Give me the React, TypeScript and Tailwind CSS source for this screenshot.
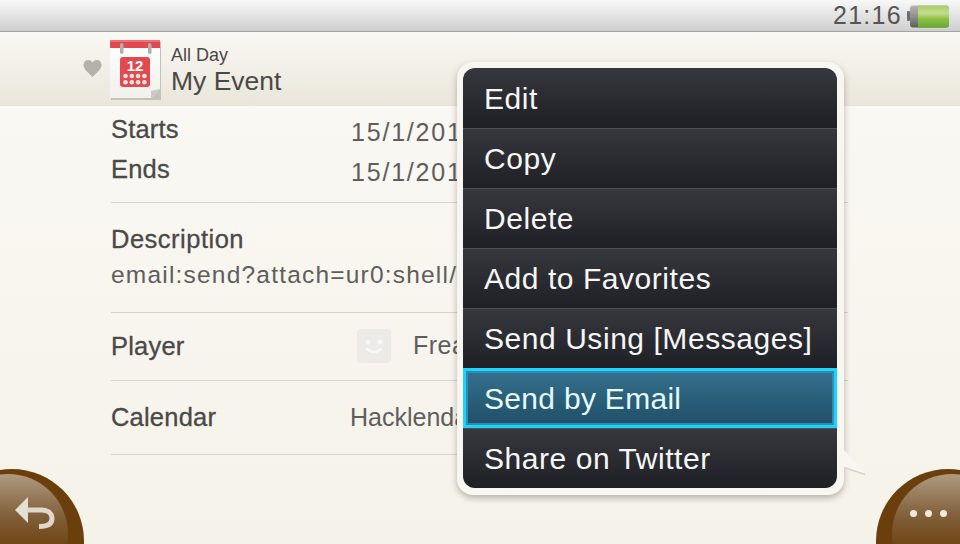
import React from "react";

const font = { fontFamily: '"Liberation Sans", Arial, sans-serif' };

function CalendarIcon() {
  return (
    <svg width="54" height="62" viewBox="0 0 54 62" className="mt-[4px] shrink-0">
      <defs>
        <linearGradient id="pg" x1="0" y1="0" x2="0" y2="1">
          <stop offset="0" stopColor="#ffffff" />
          <stop offset="1" stopColor="#f1f0ec" />
        </linearGradient>
      </defs>
      <rect x="1" y="2" width="50" height="58" fill="#c4c1b8" />
      <path d="M0 0H50V49L41 58H0Z" fill="url(#pg)" />
      <path d="M41 58L50 49L41 51Z" fill="#c9c8c3" />
      <rect x="0" y="0" width="50" height="8" fill="#e2494f" />
      <rect x="0" y="0" width="50" height="2" fill="#ee7075" />
      <rect x="10" y="3" width="3.5" height="11" rx="1.7" fill="#b1afaa" />
      <rect x="38" y="3" width="3.5" height="11" rx="1.7" fill="#b1afaa" />
      <rect x="10" y="17" width="30" height="30" rx="3" fill="#e34a50" />
      <text x="25" y="31" textAnchor="middle" fontSize="15" fontWeight="700" fill="#fff" style={font}>12</text>
      {[0, 1, 2, 3].map((c) =>
        [0, 1].map((r) => (
          <circle key={`${c}-${r}`} cx={15.5 + c * 6.3} cy={36 + r * 6.2} r="2.3" fill="#fbe3e2" />
        ))
      )}
    </svg>
  );
}

function Battery() {
  return (
    <svg width="42" height="24" viewBox="0 0 42 24" className="ml-[5px]">
      <defs>
        <linearGradient id="bg1" x1="0" y1="0" x2="0" y2="1">
          <stop offset="0" stopColor="#a9cc6a" />
          <stop offset="0.35" stopColor="#c5dd8e" />
          <stop offset="0.6" stopColor="#8cc246" />
          <stop offset="1" stopColor="#6aa82e" />
        </linearGradient>
        <linearGradient id="bg2" x1="0" y1="0" x2="0" y2="1">
          <stop offset="0" stopColor="#b5b5b5" />
          <stop offset="0.5" stopColor="#8f8f8f" />
          <stop offset="1" stopColor="#5c5c5c" />
        </linearGradient>
      </defs>
      <rect x="0" y="7" width="3" height="10" rx="1" fill="#6e6e6e" />
      <rect x="3" y="1.5" width="39" height="22" rx="3" fill="url(#bg2)" />
      <path d="M11 1.5H39A3 3 0 0 1 42 4.5V20.5A3 3 0 0 1 39 23.5H11Z" fill="url(#bg1)" />
    </svg>
  );
}

function Row({ label, className, children }: { label: string; className: string; children: React.ReactNode }) {
  return (
    <div className={`flex items-center ${className}`}>
      <span className="w-[240px] shrink-0 text-[25.5px] tracking-[0.2px] text-[#4a4947] [-webkit-text-stroke:0.3px_#4a4947]">{label}</span>
      {children}
    </div>
  );
}

const items = ["Edit", "Copy", "Delete", "Add to Favorites", "Send Using [Messages]", "Send by Email", "Share on Twitter"];

export default function App() {
  return (
    <div style={font} className="relative flex h-[544px] w-[960px] flex-col overflow-hidden bg-[#f6f3ea]">
      <div className="flex h-[32px] shrink-0 items-center justify-end border-b border-[#a3a3a3] bg-linear-to-b from-[#f8f8f8] to-[#cfcfcf] pr-[11px]">
        <span className="text-[25px] leading-none tracking-[1.3px] text-[#555555]">21:16</span>
        <Battery />
      </div>

      <div className="flex h-[74px] shrink-0 items-center border-b border-[#e6e3d8] bg-linear-to-b from-[#faf8f4] to-[#e9e6da] pl-[83px]">
        <svg width="19" height="17" viewBox="0 0 18 17" className="mr-[8px]">
          <path d="M9 17C4 12 0 9 0 5C0 2 2 0 4.6 0C6.5 0 8 1 9 2.6C10 1 11.5 0 13.4 0C16 0 18 2 18 5C18 9 14 12 9 17Z" fill="#b3b1aa" />
        </svg>
        <CalendarIcon />
        <div className="mt-[3px] ml-[7px] flex flex-col text-[#4a4947]">
          <span className="text-[18px] leading-[22px]">All Day</span>
          <span className="text-[26.5px] leading-[31px]">My Event</span>
        </div>
      </div>

      <div className="flex flex-1 flex-col bg-linear-to-b from-[#faf8f3] to-[#f5f2e9] pl-[111px] pr-[112px]">
        <div className="flex flex-col border-b border-[#d6d4cc] pt-[3px] pb-[13px]">
          <Row label="Starts" className="h-[40px]">
            <span className="mt-[8px] text-[25px] tracking-[1.8px] text-[#5f5e5c]">15/1/2013</span>
          </Row>
          <Row label="Ends" className="h-[40px]">
            <span className="mt-[8px] text-[25px] tracking-[1.8px] text-[#5f5e5c]">15/1/2013</span>
          </Row>
        </div>
        <div className="flex flex-col border-b border-[#d6d4cc] pt-[18px] pb-[19px]">
          <div className="flex h-[36px] items-center text-[25.5px] tracking-[0.5px] text-[#4a4947] [-webkit-text-stroke:0.3px_#4a4947]">Description</div>
          <div className="flex h-[36px] items-center text-[24.5px] tracking-[1.2px] text-[#5f5e5c]">email:send?attach=ur0:shell/</div>
        </div>
        <Row label="Player" className="h-[68px] border-b border-[#d6d4cc] pb-[1px]">
          <div className="ml-[6px] flex h-[34px] w-[34px] items-center justify-center rounded-[4px] bg-[#ecebe8]">
            <svg width="26" height="22" viewBox="0 0 26 22">
              <circle cx="7" cy="7" r="2.5" fill="#f7f7f5" />
              <circle cx="19" cy="7" r="2.5" fill="#f7f7f5" />
              <path d="M6 14Q13 20 20 14" stroke="#f7f7f5" strokeWidth="2.5" fill="none" strokeLinecap="round" />
            </svg>
          </div>
          <span className="ml-[22px] text-[25px] tracking-[0.5px] text-[#5f5e5c]">Freak</span>
        </Row>
        <Row label="Calendar" className="h-[74px] border-b border-[#d6d4cc]">
          <span className="-ml-px text-[25px] text-[#5f5e5c]">Hacklendar</span>
        </Row>
      </div>

      {/* Context menu */}
      <div className="absolute top-[62px] left-[457px] w-[387px] rounded-[16px] bg-[#f8f6f0] pt-[6px] pr-[7px] pb-[7px] pl-[6px] shadow-[0_3px_6px_rgba(70,60,40,0.35)]">
        <div className="flex flex-col overflow-hidden rounded-[12px]">
          {items.map((t, i) =>
            t === "Send by Email" ? (
              <div
                key={t}
                className="flex h-[60px] items-center border-[3px] border-[#1fd2fd] bg-linear-to-b from-[#35708d] to-[#214f68] pl-[18px] text-[30px] tracking-[0.3px] text-[#e4fbff] shadow-[inset_0_0_0_2px_#2a8fb3]"
              >
                {t}
              </div>
            ) : (
              <div
                key={t}
                className={`flex h-[60px] items-center bg-linear-to-b from-[#37383e] to-[#1f2025] pl-[21px] text-[30px] tracking-[0.55px] text-[#f6f6f6] ${i > 0 ? "border-t border-[#50514f]" : ""}`}
              >
                {t}
              </div>
            )
          )}
        </div>
      </div>
      <svg width="24" height="28" viewBox="0 0 24 28" className="absolute top-[448px] left-[843px]">
        <path d="M1 2L23 26L1 19Z" fill="#f8f6f0" />
        <path d="M1 19.5L22 26.5" stroke="#d8d4c6" strokeWidth="1.5" fill="none" />
      </svg>

      {/* Back button */}
      <div className="absolute top-[469px] left-[-60px] h-[144px] w-[144px] rounded-full bg-[#6b3f0c]">
        <div className="absolute top-[5px] left-[8px] h-[120px] w-[120px] rounded-full bg-linear-to-b from-[#b09a80] via-[#80603a] via-35% to-[#6f4410] to-60%" />
        <svg width="42" height="36" viewBox="0 0 42 36" className="absolute top-[26px] left-[74px]">
          <path d="M1 15L14 2V28Z" fill="#e6dfd4" />
          <path d="M13 15H28C34 15 38 18.5 38 23.5C38 28.5 34 31.5 25 31.5" stroke="#e0d8cc" strokeWidth="5" fill="none" />
        </svg>
      </div>

      {/* More button */}
      <div className="absolute top-[469px] left-[876px] h-[144px] w-[144px] rounded-full bg-[#6b3f0c]">
        <div className="absolute top-[5px] left-[16px] h-[120px] w-[120px] rounded-full bg-linear-to-b from-[#b09a80] via-[#80603a] via-35% to-[#6f4410] to-60%" />
        <div className="absolute top-[41px] left-[34px] flex gap-[8px]">
          <span className="h-[7px] w-[7px] rounded-full bg-[#f1e9df]" />
          <span className="h-[7px] w-[7px] rounded-full bg-[#f1e9df]" />
          <span className="h-[7px] w-[7px] rounded-full bg-[#f1e9df]" />
        </div>
      </div>
    </div>
  );
}
